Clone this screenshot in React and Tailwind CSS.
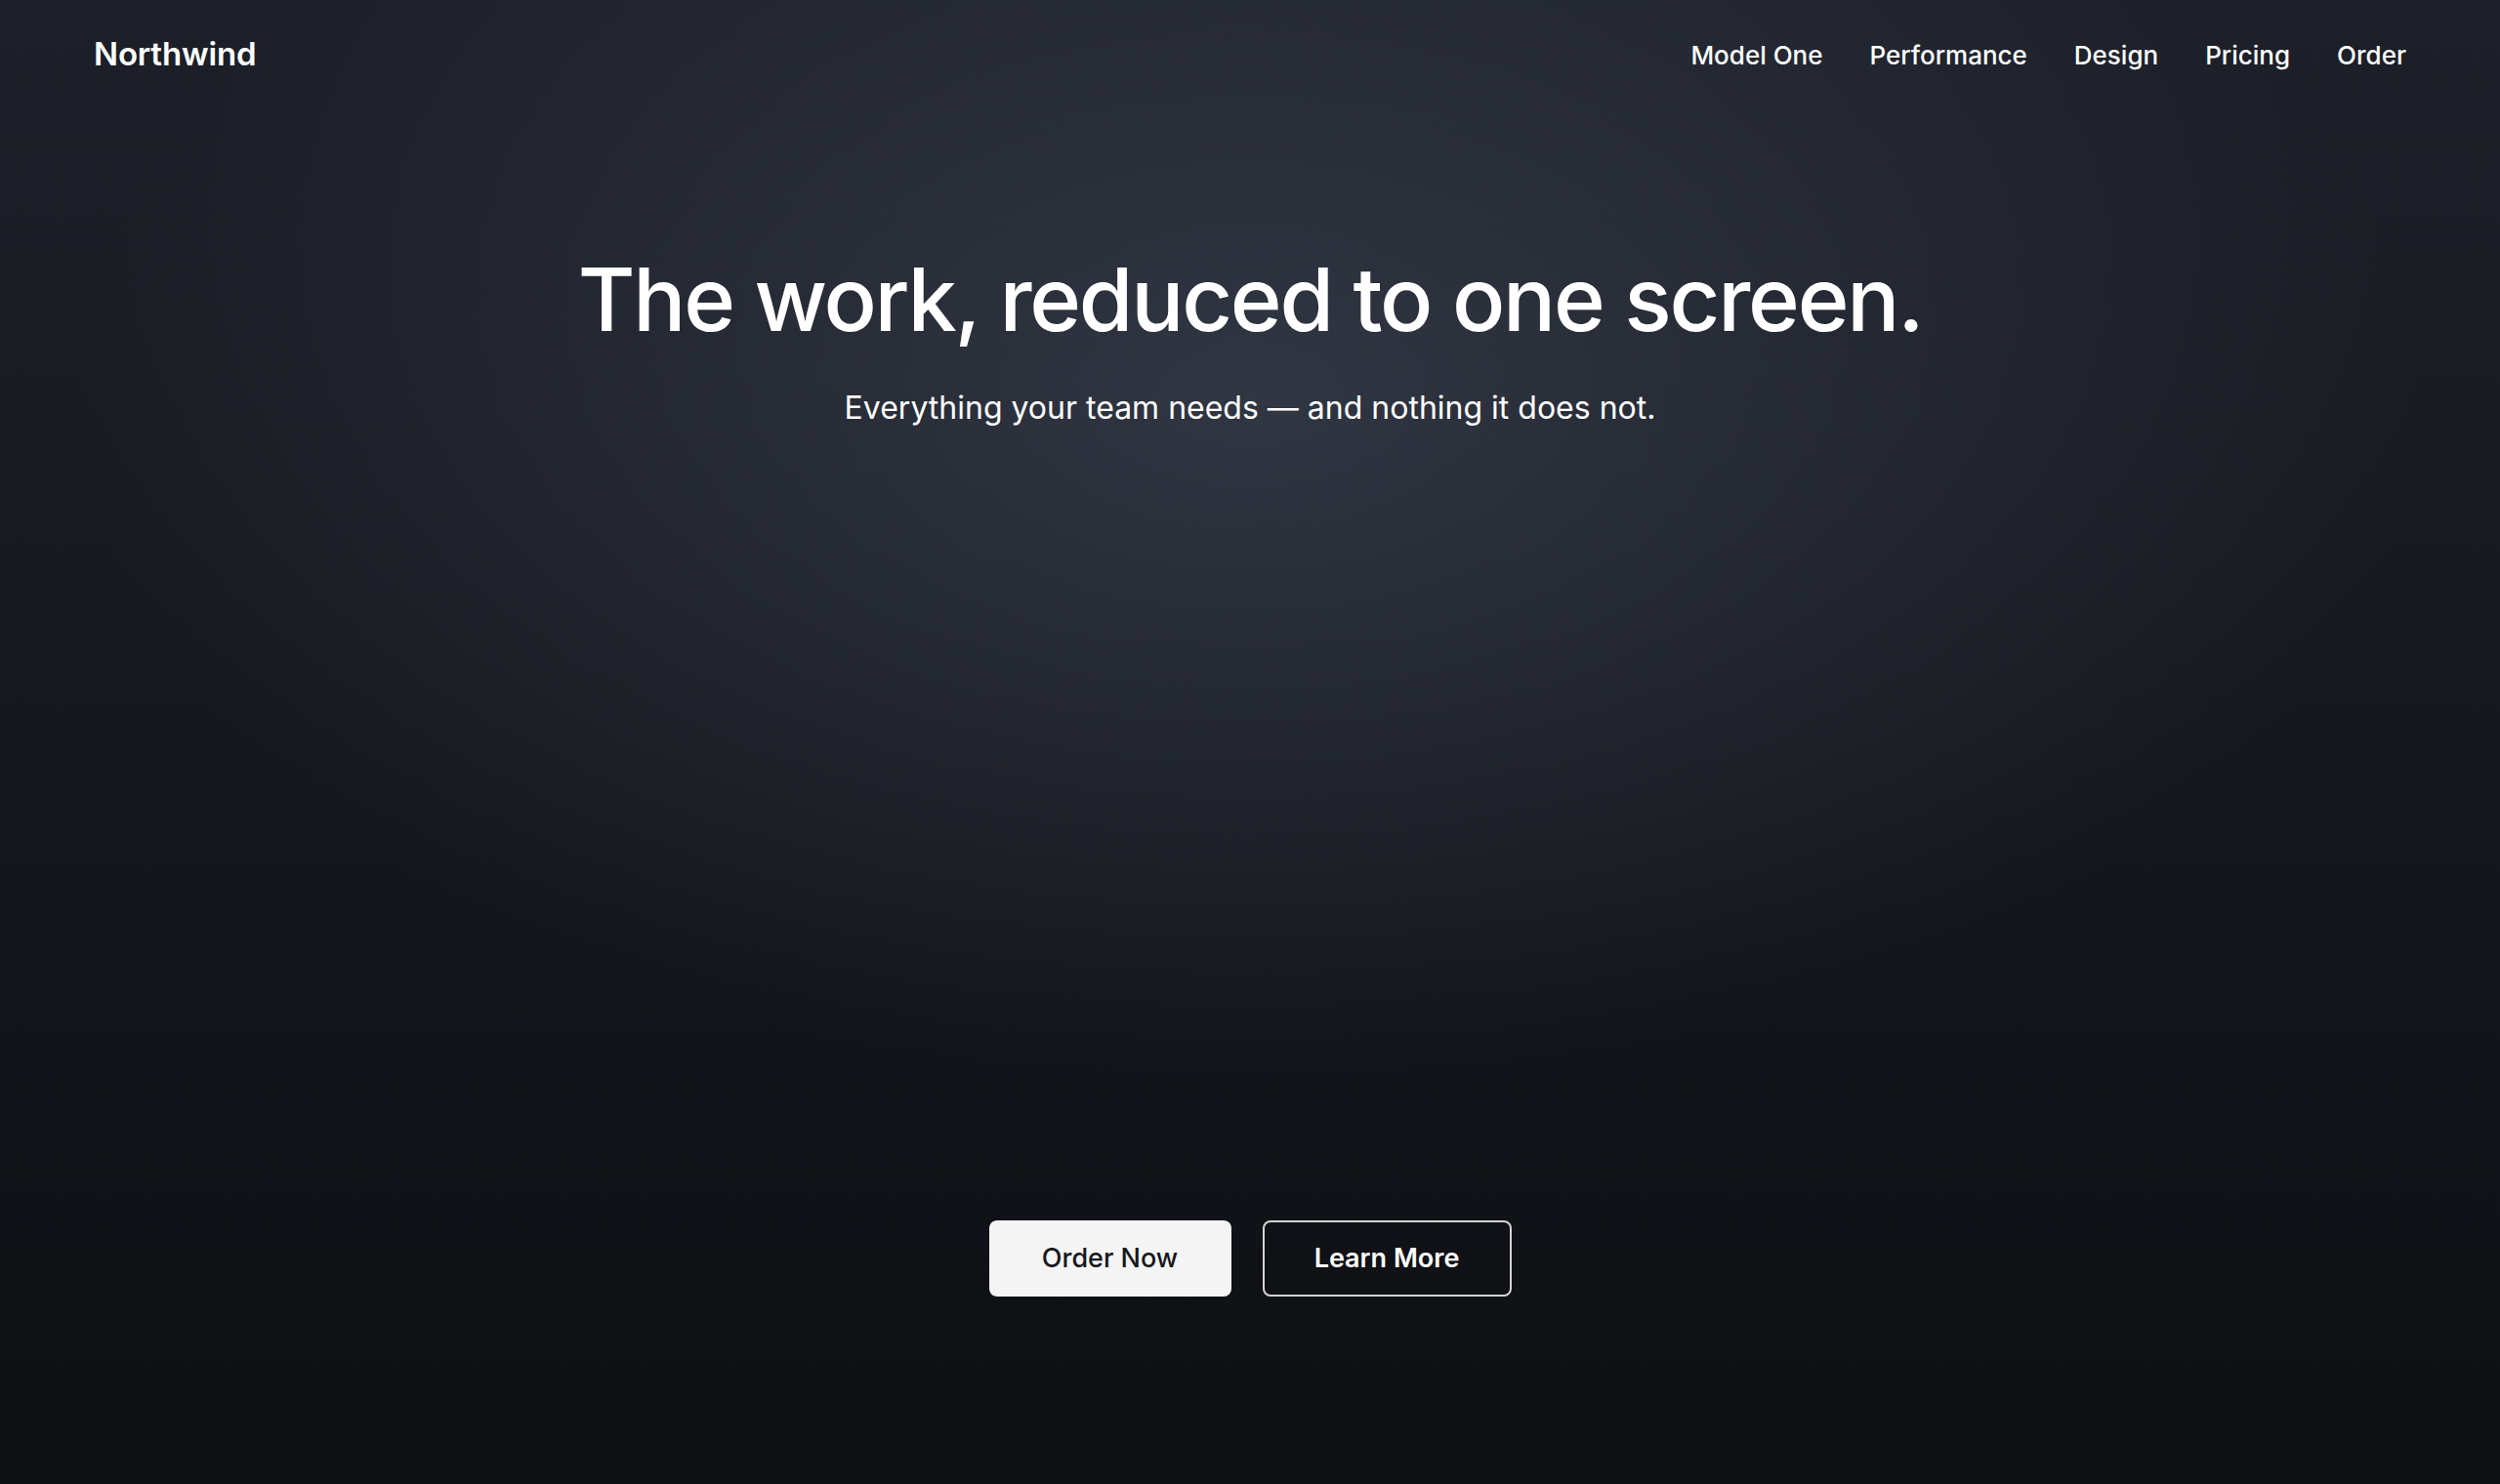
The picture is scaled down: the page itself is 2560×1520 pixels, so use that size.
import React from 'react';

const NAV_LINKS = ['Model One', 'Performance', 'Design', 'Pricing', 'Order'];

function App() {
  return (
    <div className="min-h-screen w-full text-white font-['Inter','Liberation_Sans',sans-serif] bg-[radial-gradient(ellipse_1200px_700px_at_50%_27%,rgba(64,72,88,0.6),transparent),linear-gradient(to_bottom,#1d2029,#0d0f13)]">
      {/* top bar */}
      <nav className="h-[112px] px-24 flex items-center justify-between">
        <span className="text-[33px] font-semibold tracking-[-0.005em]">Northwind</span>
        <div className="flex items-center gap-12">
          {NAV_LINKS.map((link) => (
            <a key={link} href="#" className="text-[26px] font-medium">
              {link}
            </a>
          ))}
        </div>
      </nav>

      {/* hero */}
      <section className="flex flex-col items-center pt-[150px] pb-[193px]">
        <h1 className="text-[90px] leading-none font-medium tracking-[-0.025em]">
          The work, reduced to one screen.
        </h1>
        <p className="mt-[42px] text-[32px] leading-[48px]">
          Everything your team needs — and nothing it does not.
        </p>

        {/* space where the product shot goes */}
        <div className="h-[808px]" />

        <div className="flex gap-8">
          <button className="w-[248px] h-[78px] rounded-lg bg-[#f4f4f4] text-[#15171c] text-[27px] font-medium">
            Order Now
          </button>
          <button className="w-[255px] h-[78px] rounded-lg border-2 border-[#d4d4d4] text-white text-[27px] font-semibold">
            Learn More
          </button>
        </div>
      </section>
    </div>
  );
}

export default App;
